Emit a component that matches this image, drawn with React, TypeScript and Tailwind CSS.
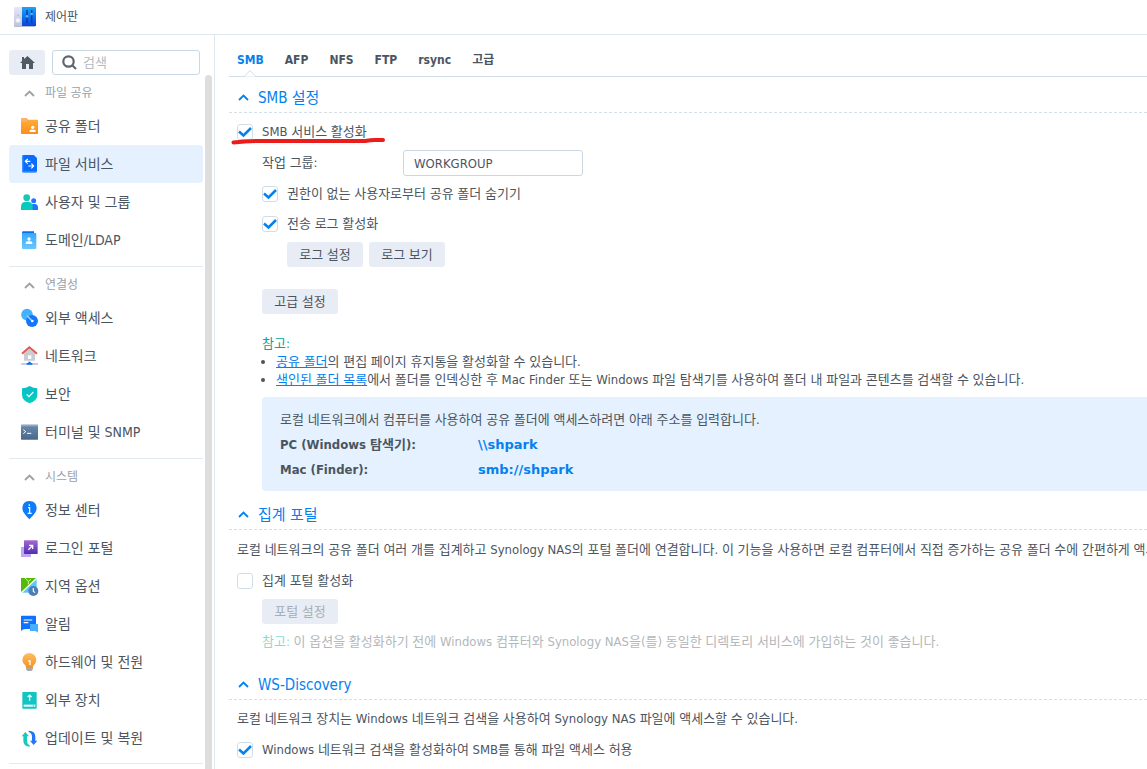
import React, { useState } from "react";

type IconName =
  | "folder"
  | "file"
  | "users"
  | "domain"
  | "external"
  | "network"
  | "security"
  | "terminal"
  | "info"
  | "portal"
  | "region"
  | "notification"
  | "power"
  | "device"
  | "update";

const icons: Record<IconName, React.ReactNode> = {
  folder: (
    <>
      <path d="M0 5q0-2 2-2h15l5 5h27q2 0 2 2v12H0z" fill="#f9b268" />
      <path d="M0 14h16l5-5h28q2 0 2 2v38q0 2-2 2H2q-2 0-2-2z" fill="url(#orange)" />
      <circle cx="35" cy="31" r="5" fill="#fff" />
      <path d="M26 45v-3q0-4 4-4h10q4 0 4 4v3z" fill="#fff" />
    </>
  ),
  file: (
    <>
      <path d="M3 4q0-4 4-4h31l10 10v39q0 4-4 4H7q-4 0-4-4z" fill="#3d8dfb" />
      <path d="M7 0h31l10 10v39H10q-3 0-3-4z" fill="#0a6cff" />
      <path d="M28 19H13m7-7-7 7 7 7M22 33h16m-7-7 7 7-7 7" stroke="#fff" strokeWidth="3.500" fill="none" />
    </>
  ),
  users: (
    <>
      <circle cx="17" cy="14" r="10" fill="#17c8b9" />
      <circle cx="38" cy="23" r="7.500" fill="#1f75ff" />
      <path d="M30 51V36q2-3 7-3h4q10 0 10 11v7z" fill="#1f75ff" />
      <path d="M0 51V42q0-15 13-15h9q13 0 13 15v9z" fill="#05cabd" />
    </>
  ),
  domain: (
    <>
      <path d="M3 5q0-4 4-4h32v10H3z" fill="#0870f6" />
      <rect x="3" y="6" width="43" height="48" rx="3" fill="url(#sky)" />
      <circle cx="24" cy="24" r="5" fill="#fff" />
      <path d="M14 39v-3q0-5 5-5h10q5 0 5 5v3z" fill="#fff" />
    </>
  ),
  external: (
    <>
      <circle cx="18" cy="17" r="17.500" fill="#43b1fd" />
      <circle cx="33" cy="36" r="18" fill="#1476fb" />
      <path d="m18 20 15 15" stroke="#a9d6ff" strokeWidth="4" />
      <circle cx="34" cy="36" r="4" fill="#fff" />
    </>
  ),
  network: (
    <>
      <path d="M9 19 25 5l17 14v22H9z" fill="#c9cdd3" />
      <path d="M3 20 25 1l23 19" fill="none" stroke="#dc5a55" strokeWidth="6" />
      <path d="M21 25h10v11H21z" fill="#fff" />
      <path d="M1 51h50" stroke="#b9c6d6" strokeWidth="5" />
      <path d="M17 53v-5h5v-4h7v4h5v5z" fill="#0a70fb" />
    </>
  ),
  security: (
    <>
      <path d="M26 3q11 7 23 7v20q0 16-23 25Q3 46 3 30V10q12 0 23-7z" fill="url(#teal)" />
      <path d="m17 28 7 7 13-14" fill="none" stroke="#fff" strokeWidth="3.500" />
    </>
  ),
  terminal: (
    <>
      <rect y="5" width="51" height="45" rx="2" fill="url(#slate)" />
      <path d="M0 5h51v5H0z" fill="#8fa9c4" />
      <path d="m7 20 7 6-7 6M18 31h13" fill="none" stroke="#fff" strokeWidth="3" />
    </>
  ),
  info: (
    <>
      <path d="M25 0q22 1 22 22 0 13-22 33Q4 35 4 22 4 1 25 0z" fill="#0f7bfa" />
      <path d="M25 10v5M21 20h5v17M20 37h12" stroke="#fff" strokeWidth="3.500" fill="none" />
    </>
  ),
  portal: (
    <>
      <path d="M0 24h30v30H0z" fill="#c0a5f6" />
      <rect x="9" y="4" width="41" height="41" rx="2" fill="url(#purple)" />
      <path d="M22 32 34 20M24 19h11v11" stroke="#fff" strokeWidth="4" fill="none" />
    </>
  ),
  region: (
    <>
      <path d="M0 3h47v44H0z" fill="#57c8ff" />
      <path d="M0 3h47L0 47z" fill="#55b90a" />
      <path d="M48 3 0 48" stroke="#fff" strokeWidth="4" />
      <path d="m12 3 10 10v9M22 13l8-6" stroke="#d5f0ae" strokeWidth="3" fill="none" />
      <circle cx="37" cy="42" r="15" fill="#4a7fb8" />
      <path d="M37 33v10l5 4" fill="none" stroke="#fff" strokeWidth="3.500" />
    </>
  ),
  notification: (
    <>
      <path d="M0 4q0-2 2-2h40q3 0 3 3v37H14Q4 42 0 48z" fill="#0d72ff" />
      <path d="M27 27h24v26q-4-5-10-5H27z" fill="#48aeff" />
      <path d="M8 15h26M8 23h14" stroke="#fff" strokeWidth="3.500" />
    </>
  ),
  power: (
    <>
      <path d="M25 0a21 21 0 0 1 21 21q0 9-9 17l-2 9H16l-2-9Q4 30 4 21A21 21 0 0 1 25 0z" fill="url(#bulb)" />
      <path d="M16 46h19v4l-4 4H20l-4-4z" fill="#a0a9b5" />
      <path d="M22 24h5v12" stroke="#fff" strokeWidth="4" fill="none" />
    </>
  ),
  device: (
    <>
      <rect x="4" y="3" width="43" height="50" rx="2" fill="#12c4c2" />
      <path d="M26 29V12m-6 6 6-6 6 6" stroke="#fff" strokeWidth="3.500" fill="none" />
      <path d="M8 41h35v6H8z" fill="#fff" />
      <path d="M35 43h4v3h-4z" fill="#12c4c2" />
    </>
  ),
  update: (
    <>
      <path d="M2 22 13 9l11 13h-6v13q0 10 8 14v4Q7 51 7 35V22z" fill="#17c9c0" />
      <path d="M23 5q20 0 20 18v12h6L38 48 27 35h6V24q0-12-10-15z" fill="#2376fa" />
    </>
  ),
};

const groups: { title: string; items: { icon: IconName; label: string }[] }[] = [
  {
    title: "파일 공유",
    items: [
      { icon: "folder", label: "공유 폴더" },
      { icon: "file", label: "파일 서비스" },
      { icon: "users", label: "사용자 및 그룹" },
      { icon: "domain", label: "도메인/LDAP" },
    ],
  },
  {
    title: "연결성",
    items: [
      { icon: "external", label: "외부 액세스" },
      { icon: "network", label: "네트워크" },
      { icon: "security", label: "보안" },
      { icon: "terminal", label: "터미널 및 SNMP" },
    ],
  },
  {
    title: "시스템",
    items: [
      { icon: "info", label: "정보 센터" },
      { icon: "portal", label: "로그인 포털" },
      { icon: "region", label: "지역 옵션" },
      { icon: "notification", label: "알림" },
      { icon: "power", label: "하드웨어 및 전원" },
      { icon: "device", label: "외부 장치" },
      { icon: "update", label: "업데이트 및 복원" },
    ],
  },
];

const tabs = ["SMB", "AFP", "NFS", "FTP", "rsync", "고급"];

const Gradient = ({ id, from, to }: { id: string; from: string; to: string }) => (
  <linearGradient id={id} x1="0" y1="0" x2="0" y2="1">
    <stop stopColor={from} />
    <stop offset="1" stopColor={to} />
  </linearGradient>
);

const Gradients = () => (
  <svg className="absolute h-0 w-0" aria-hidden="true">
    <defs>
      <Gradient id="orange" from="#ffac35" to="#fd8d1c" />
      <Gradient id="sky" from="#35a9fd" to="#6bc6ff" />
      <Gradient id="teal" from="#0abccb" to="#05cfbd" />
      <Gradient id="slate" from="#6b8bad" to="#48698c" />
      <Gradient id="purple" from="#a568d2" to="#4c2fb0" />
      <Gradient id="bulb" from="#fdbf60" to="#f68f20" />
      <Gradient id="panel" from="#1aa5f5" to="#0a43e0" />
      <Gradient id="panelLeft" from="#e6e7f7" to="#bfc4dd" />
    </defs>
  </svg>
);

const Chevron = () => (
  <svg className="h-[7px] w-[11px] shrink-0" viewBox="0 0 11 7" fill="none" stroke="currentColor" strokeWidth="1.8">
    <path d="m1 6 4.500-4.500L10 6" />
  </svg>
);

const Section = ({ title, children }: { title: string; children: React.ReactNode }) => (
  <section>
    <h2 className="flex h-9 items-center border-b border-dashed border-[#d5dfe8] pt-1.5 text-[15px] text-[#0581ee]">
      <button type="button" className="flex items-center gap-[9px] pl-[9px]">
        <Chevron />
        {title}
      </button>
    </h2>
    <div className="pl-2">{children}</div>
  </section>
);

const Checkbox = ({ label, checked = false }: { label: string; checked?: boolean }) => {
  const [on, setOn] = useState(checked);

  return (
    <label className="flex h-[30px] items-center gap-[9px]">
      <span className="relative h-4 w-4 shrink-0">
        <input
          type="checkbox"
          className="peer block h-4 w-4 appearance-none rounded-[3px] border border-[#d0deea] bg-white"
          checked={on}
          onChange={(e) => setOn(e.target.checked)}
        />
        <svg
          className="pointer-events-none absolute inset-0 hidden peer-checked:block"
          viewBox="0 0 16 16"
          fill="none"
          stroke="#0581ee"
          strokeWidth="2.5"
        >
          <path d="m2 7.500 4.500 4L14 4" />
        </svg>
      </span>
      {label}
    </label>
  );
};

const Button = ({ children, disabled }: { children: React.ReactNode; disabled?: boolean }) => (
  <button
    type="button"
    disabled={disabled}
    className="flex h-[25px] w-[76px] items-center justify-center rounded-[3px] bg-[#e8edf5] disabled:text-[#a4adb8]"
  >
    {children}
  </button>
);

const Sidebar = () => {
  const [active, setActive] = useState("파일 서비스");

  return (
    <aside className="flex w-[215px] shrink-0 flex-col border-r border-[#dfe7ef] pt-[15px] pl-[9px]">
      <div className="flex shrink-0 gap-[7px]">
        <button
          type="button"
          aria-label="홈"
          className="flex h-[25px] w-9 items-center justify-center rounded-[3px] bg-[#e8edf5]"
        >
          <svg className="h-[13px] w-[15px]" viewBox="0 0 15 13" fill="#505a64">
            <path d="M7.500 0 15 7h-2v6H9V8H6v5H2V7H0l2-2V1h2v2z" />
          </svg>
        </button>
        <label className="flex h-[25px] w-[148px] items-center gap-1.5 rounded-[3px] border border-[#c9d8e4] pl-[9px]">
          <svg className="h-[15px] w-[15px] shrink-0" viewBox="0 0 15 15" fill="none" stroke="#5b6671" strokeWidth="2.2">
            <circle cx="6.500" cy="6.500" r="5.200" />
            <path d="m10 10 4 4" />
          </svg>
          <input
            type="text"
            aria-label="검색"
            placeholder="검색"
            className="w-24 text-[13px] outline-none placeholder:text-[#b5bbc2]"
          />
        </label>
      </div>
      <div className="flex min-h-0 flex-1">
        <nav className="w-[194px] shrink-0 overflow-hidden">
          {groups.map((group) => (
            <div key={group.title} className="border-b border-[#e3e9f0] pt-1 pb-[7px] last:pb-1.5">
              <button type="button" className="flex h-7 items-center gap-[10px] pl-[15px] text-xs text-[#9aa1a9]">
                <Chevron />
                {group.title}
              </button>
              {group.items.map((item) => (
                <a
                  key={item.label}
                  href="#"
                  onClick={() => setActive(item.label)}
                  className={
                    "flex h-[38px] items-center gap-1.5 rounded-[4px] pl-3 text-sm " +
                    (active === item.label ? "bg-[#e5f1fe]" : "")
                  }
                >
                  <svg className="h-[18px] w-[18px] shrink-0 overflow-visible" viewBox="0 0 54 54">
                    {icons[item.icon]}
                  </svg>
                  {item.label}
                </a>
              ))}
            </div>
          ))}
        </nav>
        <div className="ml-0.5 w-[7px] rounded-t-[4px] bg-[#dedede]" />
      </div>
    </aside>
  );
};

const App = () => {
  const [tab, setTab] = useState("SMB");
  const [workgroup, setWorkgroup] = useState("WORKGROUP");

  return (
    <div className="flex h-screen flex-col overflow-hidden bg-white font-['DejaVu_Sans_Condensed','DejaVu_Sans','Noto_Sans_CJK_KR',sans-serif] text-[13px] leading-[18px] text-[#4b555f]">
      <Gradients />
      <header className="flex h-[35px] shrink-0 items-center gap-[9px] border-b border-[#dfe7ef] pl-3.5 text-xs">
        <svg className="h-5 w-[22px]" viewBox="0 0 66 60">
          <rect y="3" width="64" height="57" rx="3" fill="#b7bccb" />
          <path d="M3 0h21v57H0V3q0-3 3-3z" fill="url(#panelLeft)" />
          <path d="M24 0h39q3 0 3 3v54H24z" fill="url(#panel)" />
          <circle cx="12" cy="40" r="8" fill="#f2f4fb" stroke="#c4c9dc" strokeWidth="2" />
          <path d="M10 25h5" stroke="#9da6b8" strokeWidth="2" />
          <path d="M39 9v40M53 9v38" stroke="#0738a4" strokeWidth="4" />
          <circle cx="39" cy="28" r="4" fill="#4fb2fb" />
          <circle cx="53" cy="21" r="4" fill="#4fb2fb" />
        </svg>
        <h1>제어판</h1>
      </header>

      <div className="flex min-h-0 flex-1">
        <Sidebar />

        <main className="min-w-0 flex-1 overflow-hidden pl-3.5 whitespace-nowrap">
          <div
            role="tablist"
            className="flex h-[42px] items-stretch gap-[21px] border-b border-[#d0deea] pt-2 pl-2 text-xs font-bold"
          >
            {tabs.map((name) => (
              <button
                key={name}
                type="button"
                role="tab"
                aria-selected={tab === name}
                onClick={() => setTab(name)}
                className={"relative " + (tab === name ? "text-[#0581ee]" : "")}
              >
                {name}
                {tab === name && (
                  <svg
                    className="absolute -bottom-px left-1/2 h-[7px] w-3 -translate-x-1/2"
                    viewBox="0 0 12 7"
                    fill="#fff"
                    stroke="#d0deea"
                  >
                    <path d="M0 6.500 6 .7l6 5.800" />
                  </svg>
                )}
              </button>
            ))}
          </div>

          <Section title="SMB 설정">
            <div className="relative pt-1">
              <Checkbox label="SMB 서비스 활성화" checked />
              <svg
                className="pointer-events-none absolute top-6 -left-1.5 h-2 w-[155px]"
                viewBox="0 0 155 8"
                fill="none"
                stroke="#ea1c1c"
                strokeWidth="4"
                strokeLinecap="round"
                strokeLinejoin="round"
              >
                <path d="M2.500 5.500Q15 4 30 4h104q6-1 10-1h8" />
              </svg>
            </div>
            <div className="pl-[25px]">
              <div className="flex h-8 items-center">
                <label htmlFor="workgroup" className="w-[141px]">
                  작업 그룹:
                </label>
                <input
                  id="workgroup"
                  type="text"
                  value={workgroup}
                  onChange={(e) => setWorkgroup(e.target.value)}
                  className="h-[26px] w-[180px] rounded-[3px] border border-[#c9d8e4] px-2.5 outline-none"
                />
              </div>
              <Checkbox label="권한이 없는 사용자로부터 공유 폴더 숨기기" checked />
              <Checkbox label="전송 로그 활성화" checked />
              <div className="mt-[3px] flex gap-1.5 pl-[25px]">
                <Button>로그 설정</Button>
                <Button>로그 보기</Button>
              </div>
              <div className="mt-[22px]">
                <Button>고급 설정</Button>
              </div>
              <p className="mt-[21px] text-[#00a5a5]">참고:</p>
              <ul className="list-disc pl-3.5">
                <li>
                  <a href="#" className="text-[#0581ee] underline">공유 폴더</a>의 편집 페이지 휴지통을 활성화할 수 있습니다.
                </li>
                <li>
                  <a href="#" className="text-[#0581ee] underline">색인된 폴더 목록</a>에서 폴더를 인덱싱한 후 Mac Finder 또는
                  Windows 파일 탐색기를 사용하여 폴더 내 파일과 콘텐츠를 검색할 수 있습니다.
                </li>
              </ul>
              <div className="mt-2 rounded-l-[4px] bg-[#e5f1fe] pt-2.5 pb-[9px] pl-[18px] leading-[25px]">
                <p>로컬 네트워크에서 컴퓨터를 사용하여 공유 폴더에 액세스하려면 아래 주소를 입력합니다.</p>
                <dl className="grid grid-cols-[198px_1fr] font-bold">
                  <dt>PC (Windows 탐색기):</dt>
                  <dd className="font-['DejaVu_Sans',sans-serif] text-[#0581ee]">\\shpark</dd>
                  <dt>Mac (Finder):</dt>
                  <dd className="font-['DejaVu_Sans',sans-serif] text-[#0581ee]">smb://shpark</dd>
                </dl>
              </div>
            </div>
          </Section>

          <div className="mt-[3px]">
            <Section title="집계 포털">
              <p className="mt-[11px] mb-[7px]">
                로컬 네트워크의 공유 폴더 여러 개를 집계하고 Synology NAS의 포털 폴더에 연결합니다. 이 기능을 사용하면 로컬
                컴퓨터에서 직접 증가하는 공유 폴더 수에 간편하게 액세스할 수 있습니다.
              </p>
              <Checkbox label="집계 포털 활성화" />
              <div className="mt-[3px] pl-[25px]">
                <Button disabled>포털 설정</Button>
                <p className="mt-[9px] text-[#b3b7bb]">
                  <span className="text-[#8cd9d6]">참고:</span> 이 옵션을 활성화하기 전에 Windows 컴퓨터와 Synology NAS을(를)
                  동일한 디렉토리 서비스에 가입하는 것이 좋습니다.
                </p>
              </div>
            </Section>
          </div>

          <div className="mt-[13px]">
            <Section title="WS-Discovery">
              <p className="mt-[10px] mb-[7px]">
                로컬 네트워크 장치는 Windows 네트워크 검색을 사용하여 Synology NAS 파일에 액세스할 수 있습니다.
              </p>
              <Checkbox label="Windows 네트워크 검색을 활성화하여 SMB를 통해 파일 액세스 허용" checked />
            </Section>
          </div>
        </main>
      </div>
    </div>
  );
};

export default App;
